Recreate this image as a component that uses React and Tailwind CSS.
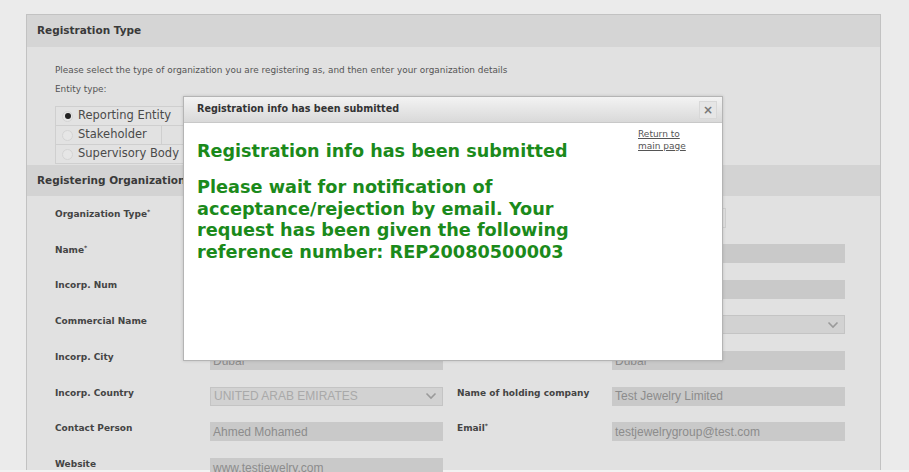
import React from "react";

const labelCls = "w-[155px] shrink-0 pb-[6px] text-[9px] font-bold text-[#444]";
const inputCls =
  "w-[233px] h-[19px] shrink-0 bg-[#c9c9c9] px-[3px] flex items-center text-[12px] text-[#8c8c8c] font-['Liberation_Sans',Arial,sans-serif]";

function Field({ value, select, faded, width }) {
  if (select) {
    return (
      <div
        className={`${width || "w-[233px]"} h-[19px] shrink-0 border border-[#c4c4c4] bg-[#d2d2d2] px-[3px] flex items-center justify-between text-[12px] text-[#a9a9a9] font-['Liberation_Sans',Arial,sans-serif]`}
      >
        <span>{value}</span>
        <svg width="12" height="8" viewBox="0 0 12 8" className="mr-[2px]">
          <path d="M1.5 1.5 L6 6 L10.5 1.5" fill="none" stroke="#9a9a9a" strokeWidth="1.6" />
        </svg>
      </div>
    );
  }
  return (
    <div className={inputCls}>
      <span className={faded ? "text-[#a5a5a5]" : ""}>{value}</span>
    </div>
  );
}

function Row({ left, leftField, right, rightField }) {
  return (
    <div className="flex items-center h-[35.7px]">
      <div className={labelCls}>{left}</div>
      {leftField}
      <div className="w-[14px] shrink-0" />
      <div className={labelCls}>{right}</div>
      {rightField}
    </div>
  );
}

function Radio({ label, checked, w }) {
  return (
    <div
      className={`${w} h-5 -mt-px first:mt-0 flex items-center border border-[#cfcfcf] bg-[#e2e2e2]`}
    >
      <span className="ml-[6px] w-[11px] h-[11px] rounded-full border border-[#d4d4d4] bg-[#e6e6e6] flex items-center justify-center">
        {checked && <span className="w-[6px] h-[6px] rounded-full bg-[#222]" />}
      </span>
      <span className="ml-[5px] text-[11.5px] text-[#4a4a4a] leading-none">{label}</span>
    </div>
  );
}

export default function App() {
  return (
    <div className="relative w-[909px] h-[472px] overflow-hidden bg-[#ebebeb] font-['DejaVu_Sans',Verdana,sans-serif]">
      <div className="ml-[26px] mt-[14px] w-[855px] h-[456px] border-l border-r border-t border-[#c2c2c2] bg-[#e1e1e1]">
        <div className="h-[32px] bg-[#d5d5d5] flex items-center pl-[10px] text-[10.5px] font-bold text-[#3a3a3a]">
          Registration Type
        </div>
        <div className="pl-[28px] pt-[14px]">
          <div className="h-[19px] leading-[19px] text-[8.9px] text-[#555]">
            Please select the type of organization you are registering as, and then enter your organization details
          </div>
          <div className="h-[19px] leading-[19px] text-[8.9px] text-[#555]">Entity type:</div>
          <div className="mt-[7px] flex flex-col">
            <Radio label="Reporting Entity" checked w="w-[130px]" />
            <Radio label="Stakeholder" w="w-[107px]" />
            <Radio label="Supervisory Body" w="w-[130px]" />
          </div>
        </div>
        <div className="mt-px h-[31px] bg-[#d3d3d3] flex items-center pl-[10px] text-[10.5px] font-bold text-[#3a3a3a]">
          Registering Organization
        </div>
        <div className="pl-[28px] pt-[4px]">
          <Row
            left={<>Organization Type<sup className="text-[6px]">*</sup></>}
            leftField={<Field value="" />}
            right=""
            rightField={
              <div className="w-[114px] h-[20px] border border-[#cfcfcf] bg-[#e1e1e1]" />
            }
          />
          <Row
            left={<>Name<sup className="text-[6px]">*</sup></>}
            leftField={<Field value="" />}
            right=""
            rightField={<Field value="" />}
          />
          <Row left="Incorp. Num" leftField={<Field value="" />} right="" rightField={<Field value="" />} />
          <Row
            left="Commercial Name"
            leftField={<Field value="" />}
            right=""
            rightField={<Field select value="Precious metals" />}
          />
          <Row left="Incorp. City" leftField={<Field value="Dubai" />} right="" rightField={<Field value="Dubai" />} />
          <Row
            left="Incorp. Country"
            leftField={<Field select value="UNITED ARAB EMIRATES" />}
            right="Name of holding company"
            rightField={<Field value="Test Jewelry Limited" />}
          />
          <Row
            left="Contact Person"
            leftField={<Field value="Ahmed Mohamed" />}
            right={<>Email<sup className="text-[6px]">*</sup></>}
            rightField={<Field value="testjewelrygroup@test.com" />}
          />
          <Row left="Website" leftField={<Field value="www.testjewelry.com" />} right="" rightField={<div />} />
        </div>
      </div>
      <div className="h-[2px] bg-[#f2f2f2]" />

      {/* modal dialog */}
      <div className="absolute left-[183px] top-[96px] w-[540px] h-[265px] border border-[#b4b4b4] bg-white shadow-[0_0_3px_rgba(0,0,0,0.15)]">
        <div className="h-[26px] border-b border-[#c8c8c8] bg-gradient-to-b from-[#f3f3f3] to-[#d9d9d9] flex items-center justify-between pl-[13px] pr-[5px]">
          <span className="text-[9.6px] font-bold text-[#333]">Registration info has been submitted</span>
          <span className="w-[18px] h-[18px] bg-[#e6e6e6] border border-[#d8d8d8] flex items-center justify-center text-[12px] font-bold text-[#777] leading-none">
            ×
          </span>
        </div>
        <div className="relative px-[13px] pt-[17px]">
          <a className="absolute left-[454px] top-[5px] text-[9px] leading-[12px] text-[#555] underline">
            Return to
            <br />
            main page
          </a>
          <div className="text-[17.6px] font-bold text-[#1b8a1b] leading-[22px]">
            Registration info has been submitted
          </div>
          <div className="mt-[15px] text-[17.7px] font-bold text-[#1b8a1b] leading-[21.5px]">
            Please wait for notification of
            <br />
            acceptance/rejection by email. Your
            <br />
            request has been given the following
            <br />
            reference number: REP20080500003
          </div>
        </div>
      </div>
    </div>
  );
}
